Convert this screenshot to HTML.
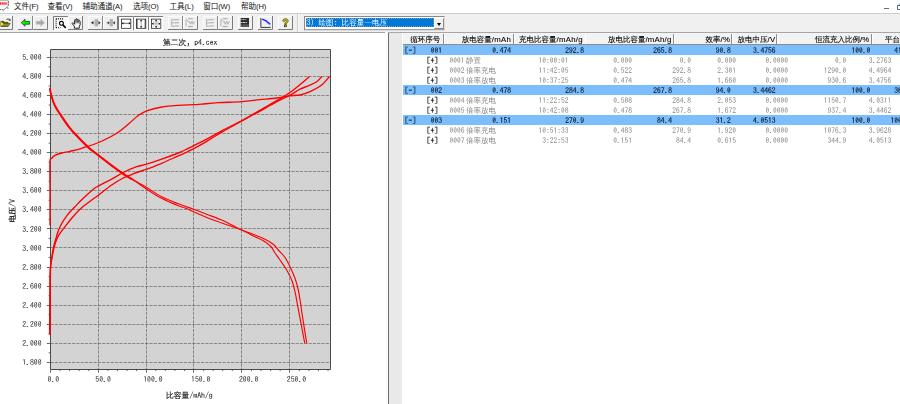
<!DOCTYPE html>
<html lang="zh-CN">
<head>
<meta charset="utf-8">
<title>p4.cex</title>
<style>
html,body{margin:0;padding:0;}
body{width:900px;height:404px;overflow:hidden;background:#fff;position:relative;font-family:"Liberation Sans","Noto Sans CJK SC",sans-serif;-webkit-text-size-adjust:none;}
#menubar{position:absolute;left:0;top:0;width:900px;height:13px;background:#fff;border-bottom:1px solid #cdcdcd;box-sizing:content-box;height:12.6px}
#menubar span{position:absolute;top:1.7px;font-size:7.6px;line-height:10px;color:#111;white-space:nowrap;letter-spacing:-0.1px}
#toolbar{will-change:transform;position:absolute;left:0;top:13.6px;width:900px;height:18px;background:#f0f0f0;border-bottom:1px solid #fff}
#tbsvg{position:absolute;left:0;top:-0.6px}
#combo{position:absolute;left:304.2px;top:2.4px;width:141px;height:14px;box-sizing:border-box;border:1px solid;border-color:#8a8a8a #dcdcdc #a0a0a0 #8a8a8a;box-shadow:0 0.6px 0 #d0d0d0;background:#fff}
#combo .sel{position:absolute;left:0.9px;top:1px;width:127.5px;height:9px;background:#0078d7;outline:1px dotted rgba(255,205,160,0.45);outline-offset:-1px;color:#fff;font-family:"IPAGothic","WenQuanYi Zen Hei","Noto Sans CJK SC",monospace;font-size:7.5px;line-height:9px;white-space:nowrap;overflow:hidden;letter-spacing:0.15px;padding-left:0.6px;box-sizing:border-box}
#combo .btn{position:absolute;right:0.3px;top:0.4px;width:10.4px;height:11.4px;background:#f0f0f0;border:0.7px solid;border-color:#fff #8a8a8a #8a8a8a #fff;box-sizing:border-box}
#combo .btn:after{content:"";position:absolute;left:2.2px;top:3.8px;border:2.4px solid transparent;border-top:3px solid #000;border-bottom:0}
#lefttop{position:absolute;left:0;top:32px;width:385px;height:1.4px;background:#a6a6a6}
#leftpane{position:absolute;left:0;top:33.4px;width:386px;height:371px;background:#fff;overflow:hidden}
.chart{position:absolute;left:0;top:-0.4px;will-change:transform}
.chart text{fill:#222}
.nc{font-family:"Noto Sans CJK SC",sans-serif}
.cj .ax{stroke-width:0.08px}
.ax{font-family:"IPAGothic","Liberation Mono",monospace;font-size:7.75px;letter-spacing:0;fill:#222}
.cj{font-family:"WenQuanYi Zen Hei","Noto Sans CJK SC",sans-serif;font-size:7.8px;fill:#111;stroke:#111;stroke-width:0.15px}
#split0{position:absolute;left:386px;top:32px;width:2px;height:372px;background:#fbfbfb}
#split1{position:absolute;left:387.8px;top:32.4px;width:1.1px;height:372px;background:#6e6e6e}
#split2{position:absolute;left:388.9px;top:33.4px;width:13.5px;height:371px;background:#e9e9e9}
#righttop{position:absolute;left:388px;top:32px;width:512px;height:1.4px;background:#a6a6a6}
#list{will-change:transform;position:absolute;left:403px;top:0;width:497px;height:404px;overflow:hidden;font-family:"IPAGothic","Liberation Mono","WenQuanYi Zen Hei",monospace;font-size:7.5px}
.hdr{position:absolute;left:0;top:33.4px;width:497px;height:10.2px;background:#f3f3f3;border-bottom:1px solid #8c8c8c;color:#000;-webkit-text-stroke:0.1px #000}
.hdr .sep{position:absolute;top:0.4px;width:0.9px;height:9.8px;background:#8c8c8c;border-right:0.8px solid #fff}
.row{position:absolute;left:0;width:497px;height:10px}
.row.m{background:#7cbdfc;color:#06162a;-webkit-text-stroke:0.12px #06162a}
.row.s{color:#858585}
.row.s .k{color:#000;-webkit-text-stroke:0.15px #000}
.row b,.hdr b{position:absolute;top:0;font-weight:normal;line-height:10px;white-space:nowrap}
.hdr b{top:0.4px}
b.r{text-align:right}
.c{font-family:"WenQuanYi Zen Hei","Noto Sans CJK SC",sans-serif;font-size:7.5px}
.n{margin-left:1.6px}
.hl{font-family:"Liberation Sans",sans-serif;font-size:7.8px;letter-spacing:0.25px}
#mdi{position:absolute;left:884px;top:7.6px;width:4.6px;height:1px;background:#5d6f8a}
#mdi2{position:absolute;left:896.8px;top:4.6px;width:5px;height:3.4px;border:0.8px solid #5d6f8a;border-top-width:1.4px;box-shadow:1.4px -1.6px 0 -0.4px #8b99ad}
#appicon{position:absolute;left:0;top:0;width:10px;height:12px}
</style>
</head>
<body>
<div id="menubar">
<svg id="appicon" viewBox="0 0 10 12"><path d="M0 0H8.3V5.6C8.3 7.4 6.2 7 5.4 8.4C4.6 9.8 3.4 10.4 2.4 9.8C1.4 9.2 0.8 9.4 0 9.8Z" fill="#fff"/><path d="M0 0.5H8" stroke="#b9b9b9" stroke-width="1"/><path d="M8.3 0.8V5.6C8.3 7.4 6.2 7 5.4 8.4C4.6 9.8 3.4 10.4 2.4 9.8C1.4 9.2 0.8 9.4 0 9.8" fill="none" stroke="#4a4a4a" stroke-width="0.9" stroke-dasharray="2.2 0.5"/><path d="M0 3.5H7.2" stroke="#ff2a2a" stroke-width="2.6" stroke-dasharray="1.6 0.5"/><path d="M0 6.4H5" stroke="#e4e4e4" stroke-width="0.7"/><rect x="7.2" y="7.7" width="1.3" height="1.1" fill="#22a0a0"/></svg>
<span style="left:14px">文件(F)</span>
<span style="left:47.6px">查看(V)</span>
<span style="left:82.6px">辅助通道(A)</span>
<span style="left:133px">选项(O)</span>
<span style="left:169.6px">工具(L)</span>
<span style="left:203.2px">窗口(W)</span>
<span style="left:241px">帮助(H)</span>
<div id="mdi"></div><div id="mdi2"></div>
</div>
<div id="toolbar">
<svg id="tbsvg" width="302" height="20" viewBox="0 13 302 20">
<path d="M-1.6 29.5V16.4H12.5" fill="none" stroke="#fff" stroke-width="0.9"/>
<path d="M-2.0 29.5H12.5V16.0" fill="none" stroke="#7c7c7c" stroke-width="1"/>
<g transform="translate(0.1 17.8) scale(0.625)"><path d="M1.2 5.6H6L7.2 7.2H12.6V13.6H1.2Z" fill="#5e5e08" stroke="#2a2a00" stroke-width="0.8"/><path d="M1.4 13.6L4.6 8.8H16.4L13 13.6Z" fill="#8e8e1e" stroke="#2a2a00" stroke-width="0.8"/><path d="M1.6 6.6L5.4 9.8L1.6 13Z" fill="#ffff50"/><path d="M10 3.4C11.2 1.2 14.6 1.2 15.6 3.6" fill="none" stroke="#222" stroke-width="1.3"/><path d="M16.6 1.6V4.8H13.4Z" fill="#222"/></g>
<path d="M18.4 29.5V16.4H32.5" fill="none" stroke="#fff" stroke-width="0.9"/>
<path d="M18.0 29.5H32.5V16.0" fill="none" stroke="#7c7c7c" stroke-width="1"/>
<g transform="translate(20.7 17.8) scale(0.625)"><path d="M0.9 7.9L6.9 2.3V5.7H14.2V10.3H6.9V13.5Z" fill="#00f400" stroke="#202020" stroke-width="1.1" stroke-linejoin="round"/></g>
<path d="M33.4 29.5V16.4H47.5" fill="none" stroke="#fff" stroke-width="0.9"/>
<path d="M33.0 29.5H47.5V16.0" fill="none" stroke="#7c7c7c" stroke-width="1"/>
<g transform="translate(35.1 17.8) scale(0.625)"><path d="M15.1 7.9L9.1 2.3V5.7H1.8V10.3H9.1V13.5Z" fill="#a6a6a6" stroke="#bdbdbd" stroke-width="0.9" stroke-linejoin="round"/></g>
<rect x="53.0" y="16.0" width="15.0" height="14.0" fill="#fbfbfb"/>
<path d="M53.5 30.0V16.5H68.0" fill="none" stroke="#7c7c7c" stroke-width="1"/>
<path d="M54.0 29.8H67.8V17.0" fill="none" stroke="#fff" stroke-width="0.9"/>
<g transform="translate(55.6 18.3) scale(0.625)"><path d="M0.8 0.9H13.6M0.8 0.9V15.2M0.8 15.2H8" fill="none" stroke="#000" stroke-width="1.7" stroke-dasharray="1.6 1.6"/><circle cx="9.3" cy="8.1" r="3.1" fill="#fff" stroke="#000" stroke-width="1.8"/><path d="M11.6 10.6L16.2 15.4" stroke="#000" stroke-width="2.6"/></g>
<path d="M68.4 29.5V16.4H82.5" fill="none" stroke="#fff" stroke-width="0.9"/>
<path d="M68.0 29.5H82.5V16.0" fill="none" stroke="#7c7c7c" stroke-width="1"/>
<g transform="translate(69.9 17.8) scale(0.625)"><g transform="translate(1.9 0.2) scale(1.06)"><path d="M5 15.5V12.5L1.8 8.8C1.2 7.6 2.8 6.8 3.7 7.8L5.4 9.6V3.4C5.4 2 7.3 2 7.4 3.4V2.2C7.5 0.8 9.4 0.8 9.5 2.2V3.2C9.7 1.9 11.5 2 11.6 3.4V4.8C11.9 3.7 13.6 3.9 13.6 5.4V10.5L12.4 12.7V15.5Z" fill="#fff" stroke="#111" stroke-width="1.4"/><path d="M6 2.4H12.6L13 6.4H6Z" fill="#777" opacity="0.75"/><path d="M7.4 3.5V8.4M9.5 3.5V8.4M11.6 4.5V8.4" stroke="#333" stroke-width="0.9"/></g></g>
<path d="M88.4 29.5V16.4H102.5" fill="none" stroke="#fff" stroke-width="0.9"/>
<path d="M88.0 29.5H102.5V16.0" fill="none" stroke="#7c7c7c" stroke-width="1"/>
<g transform="translate(90.7 17.8) scale(0.625)"><rect x="6.4" y="2.2" width="5.3" height="11.4" fill="#a4a4a4"/><path d="M7.6 2.2V13.6M9.1 2.2V13.6M10.6 2.2V13.6" stroke="#c6c6c6" stroke-width="0.6"/><path d="M0.3 8L4.4 5.2V10.8Z M15.8 8L12.4 5.2V10.8Z" fill="#2a2a2a"/><path d="M4.4 8H6.4M11.7 8H12.6" stroke="#777" stroke-width="1"/></g>
<path d="M103.4 29.5V16.4H117.5" fill="none" stroke="#fff" stroke-width="0.9"/>
<path d="M103.0 29.5H117.5V16.0" fill="none" stroke="#7c7c7c" stroke-width="1"/>
<g transform="translate(105.3 17.8) scale(0.625)"><rect x="7" y="2.2" width="5" height="11.4" fill="#a4a4a4"/><path d="M8.2 2.2V13.6M9.6 2.2V13.6M11 2.2V13.6" stroke="#c6c6c6" stroke-width="0.6"/><path d="M7 8L3.8 5.4V10.6Z M12 8L15.2 5.4V10.6Z" fill="#2a2a2a"/><path d="M1.6 8H3.8M15.2 8H16.6" stroke="#888" stroke-width="1"/></g>
<rect x="118.0" y="16.0" width="15.0" height="14.0" fill="#fbfbfb"/>
<path d="M118.5 30.0V16.5H133.0" fill="none" stroke="#7c7c7c" stroke-width="1"/>
<path d="M119.0 29.8H132.8V17.0" fill="none" stroke="#fff" stroke-width="0.9"/>
<g transform="translate(120.5 18.3) scale(0.625)"><rect x="1.5" y="1.3" width="15" height="14.7" fill="#fff" stroke="#111" stroke-width="1.15"/><path d="M2 8H16" stroke="#111" stroke-width="1"/><path d="M2 8L4.6 6.2V9.8Z M16 8L13.4 6.2V9.8Z" fill="#000"/></g>
<rect x="133.0" y="16.0" width="15.0" height="14.0" fill="#fbfbfb"/>
<path d="M133.5 30.0V16.5H148.0" fill="none" stroke="#7c7c7c" stroke-width="1"/>
<path d="M134.0 29.8H147.8V17.0" fill="none" stroke="#fff" stroke-width="0.9"/>
<g transform="translate(135.5 18.3) scale(0.625)"><rect x="1.5" y="1.3" width="15" height="14.7" fill="#fff" stroke="#111" stroke-width="1.15"/><path d="M2.6 1.3V16M15.4 1.3V16" stroke="#000" stroke-width="1"/><path d="M9 3V14.4" stroke="#8a8a8a" stroke-width="1.1"/><path d="M9 2L7.2 4.8H10.8Z M9 15.4L7.2 12.6H10.8Z" fill="#111"/></g>
<rect x="148.0" y="16.0" width="15.0" height="14.0" fill="#fbfbfb"/>
<path d="M148.5 30.0V16.5H163.0" fill="none" stroke="#7c7c7c" stroke-width="1"/>
<path d="M149.0 29.8H162.8V17.0" fill="none" stroke="#fff" stroke-width="0.9"/>
<g transform="translate(150.5 18.3) scale(0.625)"><rect x="1.5" y="1.3" width="15" height="14.7" fill="#fff" stroke="#111" stroke-width="1.15"/><path d="M2 8.6H16M9 2V15.4" stroke="#9a9a9a" stroke-width="1"/><path d="M3.4 3.2L14.6 14M14.6 3.2L3.4 14" stroke="#b4b4b4" stroke-width="0.9"/><path d="M2 8.6L4.8 6.6V10.6Z M16 8.6L13.2 6.6V10.6Z M9 2L7 4.6H11Z M9 15.4L7 12.8H11Z" fill="#111"/></g>
<path d="M168.4 29.5V16.4H182.5" fill="none" stroke="#fff" stroke-width="0.9"/>
<path d="M168.0 29.5H182.5V16.0" fill="none" stroke="#7c7c7c" stroke-width="1"/>
<g transform="translate(170.4 17.8) scale(0.625)"><path d="M2.1 2.6V13.6M2.1 3.2H6.6M2.1 8.3H6.6M2.1 13.6H6.6" fill="none" stroke="#a2a2a2" stroke-width="1.2"/><path d="M6.6 3.2H13.6M6.6 8.3H13.6M6.6 13.4H13.6" stroke="#a8a8a8" stroke-width="2"/><path d="M6.6 4.6H13.8M6.6 9.7H13.8M6.6 14.8H13.8" stroke="#fff" stroke-width="0.8"/></g>
<path d="M183.4 29.5V16.4H197.5" fill="none" stroke="#fff" stroke-width="0.9"/>
<path d="M183.0 29.5H197.5V16.0" fill="none" stroke="#7c7c7c" stroke-width="1"/>
<g transform="translate(185.1 17.8) scale(0.625)"><path d="M1.6 13.6V2.6L9.4 9.9" fill="none" stroke="#a2a2a2" stroke-width="1.2"/><path d="M4.3 1.8H12.3M4.6 14.2H12.3" stroke="#a8a8a8" stroke-width="1.8"/><path d="M7 5.4L9 10.4L11 5.4L13 10.4L15 5.4" fill="none" stroke="#a8a8a8" stroke-width="1.3"/><path d="M4.3 3.1H12.3M4.6 15.5H12.3" stroke="#fff" stroke-width="0.7"/></g>
<path d="M203.4 29.5V16.4H217.5" fill="none" stroke="#fff" stroke-width="0.9"/>
<path d="M203.0 29.5H217.5V16.0" fill="none" stroke="#7c7c7c" stroke-width="1"/>
<g transform="translate(205.3 17.8) scale(0.625)"><path d="M2.1 2.6V13.6M2.1 3.2H6.6M2.1 8.3H6.6M2.1 13.6H6.6" fill="none" stroke="#a2a2a2" stroke-width="1.2"/><path d="M6.6 3.2H13.6M6.6 8.3H13.6M6.6 13.4H13.6" stroke="#a8a8a8" stroke-width="2"/><path d="M6.6 4.6H13.8M6.6 9.7H13.8M6.6 14.8H13.8" stroke="#fff" stroke-width="0.8"/></g>
<path d="M218.4 29.5V16.4H232.5" fill="none" stroke="#fff" stroke-width="0.9"/>
<path d="M218.0 29.5H232.5V16.0" fill="none" stroke="#7c7c7c" stroke-width="1"/>
<g transform="translate(219.9 17.8) scale(0.625)"><path d="M1.6 13.6V2.6L9.4 9.9" fill="none" stroke="#a2a2a2" stroke-width="1.2"/><path d="M4.3 1.8H12.3M4.6 14.2H12.3" stroke="#a8a8a8" stroke-width="1.8"/><path d="M7 5.4L9 10.4L11 5.4L13 10.4L15 5.4" fill="none" stroke="#a8a8a8" stroke-width="1.3"/><path d="M4.3 3.1H12.3M4.6 15.5H12.3" stroke="#fff" stroke-width="0.7"/></g>
<path d="M238.4 29.5V16.4H252.5" fill="none" stroke="#fff" stroke-width="0.9"/>
<path d="M238.0 29.5H252.5V16.0" fill="none" stroke="#7c7c7c" stroke-width="1"/>
<g transform="translate(240.5 17.8) scale(0.625)"><rect x="0.3" y="0.3" width="13.3" height="14.3" fill="#2c2c2c"/><path d="M0.3 2.9H13.6" stroke="#e8e8e8" stroke-width="1.3" stroke-dasharray="1.4 1.2 3.6 1.2 1.4 4.5"/><path d="M0.3 7.6H13.6" stroke="#f4f4f4" stroke-width="1.5" stroke-dasharray="2 1 4 1 2 3.3"/><path d="M0.3 11.4H13.6" stroke="#9a9a9a" stroke-width="0.9"/><path d="M1 13.4H13.6" stroke="#cfcfcf" stroke-width="1" stroke-dasharray="1.3 1.1"/></g>
<path d="M258.4 29.5V16.4H272.5" fill="none" stroke="#fff" stroke-width="0.9"/>
<path d="M258.0 29.5H272.5V16.0" fill="none" stroke="#7c7c7c" stroke-width="1"/>
<g transform="translate(260.5 17.8) scale(0.625)"><path d="M0.6 0.3V15.4H16.3" fill="none" stroke="#222" stroke-width="1.4"/><path d="M2.6 2.2L9 4.8L15.4 10.4" fill="none" stroke="#1818ff" stroke-width="2"/><path d="M7 5.6L15.6 11.6M10 6L15.8 8.8" stroke="#4c4cff" stroke-width="1.2" stroke-dasharray="1.3 1"/></g>
<path d="M278.4 29.5V16.4H292.5" fill="none" stroke="#fff" stroke-width="0.9"/>
<path d="M278.0 29.5H292.5V16.0" fill="none" stroke="#7c7c7c" stroke-width="1"/>
<g transform="translate(280.4 17.8) scale(0.625)"><path d="M3.9 5.4C3.6 0.4 12.6 0.2 12.4 5C12.3 7.6 9.6 7.8 9.6 10.4H6.9C6.8 7 9.6 6.8 9.6 4.9C9.6 3.5 6.9 3.5 6.8 5.4Z" fill="#e6e000" stroke="#2e2a00" stroke-width="1.1"/><rect x="6.8" y="11.6" width="2.9" height="2.7" fill="#e6e000" stroke="#2e2a00" stroke-width="1.1"/></g>
<path d="M297.5 14.2V31.5" stroke="#c4c4c4" stroke-width="0.9"/><path d="M298.4 14.2V31.5" stroke="#fff" stroke-width="0.9"/>
</svg>
<div id="combo"><div class="sel">3) <span class="c">绘图</span>: <span class="c">比容量—电压</span></div><div class="btn"></div></div>
</div>
<div id="lefttop"></div>
<div id="leftpane">
<svg class="chart" width="386" height="371" viewBox="0 33 386 371">
<rect x="50.5" y="49.5" width="280.0" height="320.0" fill="#d3d3d3"/>
<path d="M50.5 57.50H330.5M50.5 76.50H330.5M50.5 95.50H330.5M50.5 114.50H330.5M50.5 133.50H330.5M50.5 152.50H330.5M50.5 171.50H330.5M50.5 190.50H330.5M50.5 209.50H330.5M50.5 228.50H330.5M50.5 247.50H330.5M50.5 267.50H330.5M50.5 286.50H330.5M50.5 305.50H330.5M50.5 324.50H330.5M50.5 343.50H330.5M50.5 362.50H330.5M98.50 49.5V369.5M146.50 49.5V369.5M193.50 49.5V369.5M241.50 49.5V369.5M289.50 49.5V369.5" stroke="#5a5a5a" stroke-width="0.62" stroke-dasharray="3.2 1.1" fill="none"/>
<path d="M50.5 49.5H330.5V369.5H50.5Z" stroke="#4a4a4a" stroke-width="1" fill="none"/>
<path d="M46.8 57.50H50.5M48.6 66.93H50.5M46.8 76.50H50.5M48.6 85.98H50.5M46.8 95.50H50.5M48.6 105.04H50.5M46.8 114.50H50.5M48.6 124.10H50.5M46.8 133.50H50.5M48.6 143.15H50.5M46.8 152.50H50.5M48.6 162.21H50.5M46.8 171.50H50.5M48.6 181.26H50.5M46.8 190.50H50.5M48.6 200.32H50.5M46.8 209.50H50.5M48.6 219.38H50.5M46.8 228.50H50.5M48.6 238.43H50.5M46.8 247.50H50.5M48.6 257.49H50.5M46.8 267.50H50.5M48.6 276.54H50.5M46.8 286.50H50.5M48.6 295.60H50.5M46.8 305.50H50.5M48.6 314.66H50.5M46.8 324.50H50.5M48.6 333.71H50.5M46.8 343.50H50.5M48.6 352.77H50.5M46.8 362.50H50.5M50.50 369.5V372.7M60.02 369.5V371.1M69.59 369.5V371.1M79.17 369.5V371.1M88.74 369.5V371.1M98.50 369.5V372.7M107.88 369.5V371.1M117.45 369.5V371.1M127.03 369.5V371.1M136.60 369.5V371.1M146.50 369.5V372.7M155.74 369.5V371.1M165.31 369.5V371.1M174.89 369.5V371.1M184.46 369.5V371.1M193.50 369.5V372.7M203.60 369.5V371.1M213.17 369.5V371.1M222.75 369.5V371.1M232.32 369.5V371.1M241.50 369.5V372.7M251.46 369.5V371.1M261.03 369.5V371.1M270.61 369.5V371.1M280.18 369.5V371.1M289.50 369.5V372.7M299.32 369.5V371.1M308.89 369.5V371.1M318.47 369.5V371.1M328.04 369.5V371.1" stroke="#444" stroke-width="0.8" fill="none"/>
<path d="M50.0 88.3 C50.3 89.5 50.9 92.5 51.7 95.3 C52.5 98.1 53.3 101.6 55.0 105.0 C56.7 108.4 59.2 112.0 61.7 115.8 C64.2 119.5 67.2 124.0 70.0 127.5 C72.8 131.0 75.2 133.5 78.3 136.7 C81.3 139.9 84.9 143.6 88.3 146.7 C91.7 149.8 94.8 151.9 98.7 155.0 C102.6 158.1 107.6 161.9 111.7 165.0 C115.8 168.1 119.1 170.5 123.3 173.3 C127.5 176.1 132.8 179.3 136.7 181.7 C140.6 184.1 142.5 185.0 146.7 187.5 C150.9 190.0 156.4 194.0 161.7 196.7 C167.0 199.4 173.0 201.7 178.3 203.8 C183.6 205.9 188.8 207.5 193.5 209.2 C198.2 210.9 202.0 212.4 206.7 214.2 C211.4 216.0 217.3 218.1 221.7 220.0 C226.1 221.9 230.0 224.1 233.3 225.8 C236.6 227.5 238.1 228.5 241.7 230.0 C245.3 231.5 251.1 233.5 255.0 235.0 C258.9 236.5 261.9 237.7 265.0 239.2 C268.1 240.7 271.1 242.4 273.3 244.2 C275.5 246.0 276.4 247.8 278.3 250.0 C280.2 252.2 283.1 254.7 285.0 257.5 C286.9 260.3 288.3 263.2 290.0 266.7 C291.7 270.2 293.6 274.4 295.0 278.3 C296.4 282.2 297.3 285.6 298.3 290.0 C299.3 294.4 300.1 300.6 300.8 305.0 C301.5 309.4 301.5 310.4 302.5 316.7 C303.5 323.0 306.0 338.6 306.7 343.0" stroke="#ff0000" stroke-width="1.15" fill="none" stroke-linejoin="round" stroke-linecap="round"/>
<path d="M49.8 88.8 C50.0 89.9 50.6 93.0 51.5 95.8 C52.3 98.5 53.1 102.0 54.8 105.5 C56.4 108.9 59.0 112.5 61.5 116.2 C64.0 120.0 67.0 124.5 69.8 128.0 C72.5 131.4 75.0 133.9 78.0 137.1 C81.1 140.3 84.6 144.1 88.0 147.1 C91.5 150.2 94.5 152.4 98.5 155.4 C102.4 158.5 107.4 162.4 111.5 165.4 C115.5 168.5 118.9 171.0 123.0 173.8 C127.2 176.5 132.5 179.6 136.4 182.1 C140.4 184.7 142.5 186.5 146.7 189.2 C150.9 191.9 156.4 195.5 161.7 198.3 C167.0 201.1 174.4 204.2 178.3 205.8 C182.2 207.4 182.5 207.0 185.0 208.0 C187.5 209.0 189.7 210.1 193.3 211.7 C196.9 213.3 202.0 215.6 206.7 217.5 C211.4 219.4 217.3 221.4 221.7 223.0 C226.1 224.6 230.0 225.8 233.3 227.0 C236.6 228.2 238.1 228.4 241.7 230.0 C245.3 231.6 251.1 234.8 255.0 236.7 C258.9 238.6 262.2 239.9 265.0 241.7 C267.8 243.5 270.0 245.6 271.7 247.5 C273.4 249.4 273.6 250.9 275.0 253.0 C276.4 255.1 278.1 257.2 280.0 260.0 C281.9 262.8 284.8 266.7 286.7 270.0 C288.6 273.3 290.3 276.4 291.7 280.0 C293.1 283.6 294.0 287.5 295.0 291.7 C296.0 295.9 296.7 300.8 297.5 305.0 C298.3 309.2 298.5 310.4 299.7 316.7 C300.9 323.0 303.9 338.6 304.7 343.0" stroke="#ff0000" stroke-width="1.15" fill="none" stroke-linejoin="round" stroke-linecap="round"/>
<path d="M49.5 89.1 C49.8 90.3 50.4 93.4 51.2 96.1 C52.1 98.9 52.9 102.4 54.5 105.8 C56.2 109.3 58.8 112.9 61.2 116.6 C63.8 120.4 66.8 124.9 69.5 128.3 C72.3 131.8 74.8 134.3 77.8 137.5 C80.9 140.7 84.4 144.5 87.8 147.5 C91.2 150.6 94.3 152.8 98.2 155.8 C102.2 158.9 107.2 162.8 111.2 165.8 C115.3 168.9 119.5 171.9 122.8 174.2 C126.2 176.4 129.8 178.4 131.2 179.3" stroke="#ff0000" stroke-width="1.15" fill="none" stroke-linejoin="round" stroke-linecap="round"/>
<path d="M50.0 225.0 C50.0 219.2 50.0 200.6 50.0 190.0 C50.0 179.4 49.7 167.0 50.0 161.7 C50.3 156.4 50.9 159.4 51.7 158.3 C52.5 157.2 53.3 156.2 55.0 155.3 C56.7 154.4 59.2 153.7 61.7 153.0 C64.2 152.3 66.7 152.1 70.0 151.3 C73.3 150.5 76.9 149.8 81.7 148.3 C86.5 146.8 92.9 145.0 98.7 142.5 C104.5 140.0 111.8 136.4 116.7 133.3 C121.6 130.2 124.7 127.2 128.3 124.2 C131.9 121.2 135.2 117.7 138.3 115.5 C141.4 113.3 142.8 112.2 146.7 110.8 C150.6 109.4 156.4 107.9 161.7 107.0 C167.0 106.1 173.0 105.7 178.3 105.3 C183.7 104.9 189.9 104.9 193.8 104.7 C197.7 104.5 197.6 104.6 201.7 104.2 C205.8 103.8 211.6 103.0 218.3 102.6 C225.0 102.2 234.8 102.2 241.7 101.7 C248.6 101.2 254.2 100.3 260.0 99.7 C265.8 99.1 271.8 98.7 276.7 98.0 C281.6 97.3 285.8 96.3 289.7 95.8 C293.6 95.3 296.3 95.8 300.0 95.0 C303.7 94.2 308.1 92.5 311.7 90.8 C315.3 89.1 318.8 87.3 321.7 85.0 C324.6 82.7 327.9 78.1 329.2 76.7" stroke="#ff0000" stroke-width="1.35" fill="none" stroke-linejoin="round" stroke-linecap="round"/>
<path d="M50.0 334.0 C50.0 328.3 50.1 310.7 50.2 300.0 C50.3 289.3 50.3 276.3 50.5 270.0 C50.7 263.7 50.7 265.6 51.2 262.0 C51.7 258.4 52.4 252.7 53.3 248.3 C54.2 243.9 55.6 239.4 56.7 235.8 C57.8 232.2 58.3 230.0 60.0 226.7 C61.7 223.4 64.2 219.1 66.7 215.8 C69.2 212.5 72.2 209.6 75.0 206.7 C77.8 203.8 80.2 201.2 83.3 198.3 C86.3 195.4 90.7 191.3 93.3 189.2 C95.9 187.1 95.6 187.5 98.7 185.8 C101.8 184.1 107.6 181.4 111.7 179.2 C115.8 177.0 119.1 174.6 123.3 172.5 C127.5 170.4 132.8 168.1 136.7 166.7 C140.6 165.3 142.5 165.4 146.7 164.2 C150.9 162.9 156.4 161.1 161.7 159.2 C167.0 157.3 174.4 154.5 178.3 153.0 C182.2 151.5 182.5 151.2 185.0 150.0 C187.5 148.8 189.7 147.6 193.3 145.8 C196.9 144.0 202.0 141.7 206.7 139.2 C211.4 136.7 215.9 133.9 221.7 130.8 C227.5 127.7 236.7 123.3 241.7 120.8 C246.7 118.2 247.8 117.6 251.7 115.5 C255.6 113.4 260.6 110.8 265.0 108.3 C269.4 105.8 274.2 103.0 278.3 100.8 C282.4 98.6 286.1 97.2 289.7 95.3 C293.3 93.4 296.9 90.8 300.0 89.2 C303.1 87.6 305.5 87.0 308.3 85.8 C311.1 84.5 314.5 83.2 316.7 81.7 C318.9 80.2 320.9 77.5 321.7 76.7" stroke="#ff0000" stroke-width="1.35" fill="none" stroke-linejoin="round" stroke-linecap="round"/>
<path d="M49.6 334.0 C49.6 328.3 49.7 310.7 49.8 300.0 C49.9 289.3 49.8 277.5 50.2 270.0 C50.7 262.5 51.7 259.3 52.5 255.0 C53.3 250.7 54.0 247.4 55.0 244.2 C56.0 241.0 56.6 238.7 58.3 235.8 C60.0 232.9 62.8 229.6 65.0 226.7 C67.2 223.8 69.2 221.2 71.7 218.3 C74.2 215.4 76.7 212.2 80.0 209.2 C83.3 206.1 88.6 202.4 91.7 200.0 C94.8 197.6 95.4 197.5 98.7 195.0 C102.0 192.5 107.6 187.8 111.7 185.0 C115.8 182.2 119.1 180.1 123.3 178.0 C127.5 175.9 132.8 174.0 136.7 172.5 C140.6 171.0 142.5 170.7 146.7 169.2 C150.9 167.7 156.4 165.5 161.7 163.3 C167.0 161.1 174.4 157.5 178.3 155.8 C182.2 154.1 182.5 154.2 185.0 153.0 C187.5 151.8 189.7 150.8 193.3 148.9 C196.9 147.0 202.0 144.1 206.7 141.3 C211.4 138.5 217.0 135.0 221.7 132.2 C226.4 129.4 231.7 126.6 235.0 124.7 C238.3 122.8 238.9 122.6 241.7 121.0 C244.5 119.4 248.1 117.1 251.7 115.0 C255.3 112.9 259.4 110.5 263.3 108.3 C267.2 106.1 271.4 103.8 275.0 101.7 C278.6 99.6 281.9 97.8 285.0 95.8 C288.1 93.8 290.5 92.1 293.3 90.0 C296.1 87.9 299.1 85.5 301.7 83.3 C304.3 81.1 307.9 77.8 309.2 76.7" stroke="#ff0000" stroke-width="1.35" fill="none" stroke-linejoin="round" stroke-linecap="round"/>
<text class="ax" x="41.6" y="60.0" text-anchor="end">5.000</text>
<text class="ax" x="41.6" y="79.1" text-anchor="end">4.800</text>
<text class="ax" x="41.6" y="98.1" text-anchor="end">4.600</text>
<text class="ax" x="41.6" y="117.2" text-anchor="end">4.400</text>
<text class="ax" x="41.6" y="136.2" text-anchor="end">4.200</text>
<text class="ax" x="41.6" y="155.3" text-anchor="end">4.000</text>
<text class="ax" x="41.6" y="174.3" text-anchor="end">3.800</text>
<text class="ax" x="41.6" y="193.4" text-anchor="end">3.600</text>
<text class="ax" x="41.6" y="212.4" text-anchor="end">3.400</text>
<text class="ax" x="41.6" y="231.5" text-anchor="end">3.200</text>
<text class="ax" x="41.6" y="250.6" text-anchor="end">3.000</text>
<text class="ax" x="41.6" y="269.6" text-anchor="end">2.800</text>
<text class="ax" x="41.6" y="288.7" text-anchor="end">2.600</text>
<text class="ax" x="41.6" y="307.7" text-anchor="end">2.400</text>
<text class="ax" x="41.6" y="326.8" text-anchor="end">2.200</text>
<text class="ax" x="41.6" y="345.8" text-anchor="end">2.000</text>
<text class="ax" x="41.6" y="364.9" text-anchor="end">1.800</text>
<text class="ax" x="47.5" y="382.3">0.0</text>
<text class="ax" x="95.3" y="382.3">50.0</text>
<text class="ax" x="143.2" y="382.3">100.0</text>
<text class="ax" x="191.0" y="382.3">150.0</text>
<text class="ax" x="238.9" y="382.3">200.0</text>
<text class="ax" x="286.8" y="382.3">250.0</text>
<text class="cj" x="163" y="44.7">第二次<tspan class="nc">，</tspan><tspan class="ax">p4.cex</tspan></text>
<text class="cj" x="166" y="397.8">比容量<tspan class="ax">/mAh/g</tspan></text>
<text class="cj" transform="translate(14.6 222.5) rotate(-90)">电压<tspan class="ax">/V</tspan></text>
</svg>
</div>
<div id="split0"></div><div id="split1"></div><div id="split2"></div>
<div id="righttop"></div>
<div id="list">
<div class="hdr">
<i class="sep" style="left:40.4px"></i>
<i class="sep" style="left:110.0px"></i>
<i class="sep" style="left:181.5px"></i>
<i class="sep" style="left:269.9px"></i>
<i class="sep" style="left:328.4px"></i>
<i class="sep" style="left:373.2px"></i>
<i class="sep" style="left:467.9px"></i>
<b class="r" style="right:459.7px"><span class="c">循环序号</span></b>
<b class="r" style="right:389.0px"><span class="c">放电容量</span><span class="hl">/mAh</span></b>
<b class="r" style="right:317.2px"><span class="c">充电比容量</span><span class="hl">/mAh/g</span></b>
<b class="r" style="right:228.4px"><span class="c">放电比容量</span><span class="hl">/mAh/g</span></b>
<b class="r" style="right:169.8px"><span class="c">效率</span><span class="hl">/%</span></b>
<b class="r" style="right:124.6px"><span class="c">放电中压</span><span class="hl">/V</span></b>
<b class="r" style="right:30.5px"><span class="c">恒流充入比例</span><span class="hl">/%</span></b>
<b class="l" style="left:482.0px"><span class="c">平台</span></b>
</div>
<div class="row m" style="top:45px">
<b class="l" style="left:1.7px">[-]</b>
<b class="r" style="right:458.0px">001</b>
<b class="r" style="right:389.0px">0.474</b>
<b class="r" style="right:316.0px">292.8</b>
<b class="r" style="right:228.0px">265.8</b>
<b class="r" style="right:169.2px">90.8</b>
<b class="r" style="right:124.5px">3.4756</b>
<b class="r" style="right:29.8px">100.0</b>
<b class="l" style="left:491.3px">41</b>
</div>
<div class="row s" style="top:55px">
<b class="l k" style="left:23.7px">[+]</b>
<b class="l" style="left:46.5px">0001<span class="c n">静置</span></b>
<b class="r" style="right:331.5px">10:00:01</b>
<b class="r" style="right:268.0px">0.000</b>
<b class="r" style="right:209.0px">0.0</b>
<b class="r" style="right:164.1px">0.000</b>
<b class="r" style="right:112.0px">0.0000</b>
<b class="r" style="right:53.8px">0.0</b>
<b class="r" style="right:8.8px">3.2763</b>
</div>
<div class="row s" style="top:65px">
<b class="l k" style="left:23.7px">[+]</b>
<b class="l" style="left:46.5px">0002<span class="c n">倍率充电</span></b>
<b class="r" style="right:331.5px">11:42:05</b>
<b class="r" style="right:268.0px">0.522</b>
<b class="r" style="right:209.0px">292.8</b>
<b class="r" style="right:164.1px">2.301</b>
<b class="r" style="right:112.0px">0.0000</b>
<b class="r" style="right:53.8px">1290.0</b>
<b class="r" style="right:8.8px">4.4964</b>
</div>
<div class="row s" style="top:75px">
<b class="l k" style="left:23.7px">[+]</b>
<b class="l" style="left:46.5px">0003<span class="c n">倍率放电</span></b>
<b class="r" style="right:331.5px">10:37:25</b>
<b class="r" style="right:268.0px">0.474</b>
<b class="r" style="right:209.0px">265.8</b>
<b class="r" style="right:164.1px">1.660</b>
<b class="r" style="right:112.0px">0.0000</b>
<b class="r" style="right:53.8px">930.6</b>
<b class="r" style="right:8.8px">3.4756</b>
</div>
<div class="row m" style="top:85px">
<b class="l" style="left:1.7px">[-]</b>
<b class="r" style="right:458.0px">002</b>
<b class="r" style="right:389.0px">0.478</b>
<b class="r" style="right:316.0px">284.8</b>
<b class="r" style="right:228.0px">267.8</b>
<b class="r" style="right:169.2px">94.0</b>
<b class="r" style="right:124.5px">3.4462</b>
<b class="r" style="right:29.8px">100.0</b>
<b class="l" style="left:491.3px">36</b>
</div>
<div class="row s" style="top:95px">
<b class="l k" style="left:23.7px">[+]</b>
<b class="l" style="left:46.5px">0004<span class="c n">倍率充电</span></b>
<b class="r" style="right:331.5px">11:22:52</b>
<b class="r" style="right:268.0px">0.508</b>
<b class="r" style="right:209.0px">284.8</b>
<b class="r" style="right:164.1px">2.053</b>
<b class="r" style="right:112.0px">0.0000</b>
<b class="r" style="right:53.8px">1150.7</b>
<b class="r" style="right:8.8px">4.0311</b>
</div>
<div class="row s" style="top:105px">
<b class="l k" style="left:23.7px">[+]</b>
<b class="l" style="left:46.5px">0005<span class="c n">倍率放电</span></b>
<b class="r" style="right:331.5px">10:42:08</b>
<b class="r" style="right:268.0px">0.478</b>
<b class="r" style="right:209.0px">267.8</b>
<b class="r" style="right:164.1px">1.672</b>
<b class="r" style="right:112.0px">0.0000</b>
<b class="r" style="right:53.8px">937.4</b>
<b class="r" style="right:8.8px">3.4462</b>
</div>
<div class="row m" style="top:115px">
<b class="l" style="left:1.7px">[-]</b>
<b class="r" style="right:458.0px">003</b>
<b class="r" style="right:389.0px">0.151</b>
<b class="r" style="right:316.0px">270.9</b>
<b class="r" style="right:228.0px">84.4</b>
<b class="r" style="right:169.2px">31.2</b>
<b class="r" style="right:124.5px">4.0513</b>
<b class="r" style="right:29.8px">100.0</b>
<b class="l" style="left:487.5px">100</b>
</div>
<div class="row s" style="top:125px">
<b class="l k" style="left:23.7px">[+]</b>
<b class="l" style="left:46.5px">0006<span class="c n">倍率充电</span></b>
<b class="r" style="right:331.5px">10:51:33</b>
<b class="r" style="right:268.0px">0.483</b>
<b class="r" style="right:209.0px">270.9</b>
<b class="r" style="right:164.1px">1.920</b>
<b class="r" style="right:112.0px">0.0000</b>
<b class="r" style="right:53.8px">1076.3</b>
<b class="r" style="right:8.8px">3.9628</b>
</div>
<div class="row s" style="top:135px">
<b class="l k" style="left:23.7px">[+]</b>
<b class="l" style="left:46.5px">0007<span class="c n">倍率放电</span></b>
<b class="r" style="right:331.5px">3:22:53</b>
<b class="r" style="right:268.0px">0.151</b>
<b class="r" style="right:209.0px">84.4</b>
<b class="r" style="right:164.1px">0.615</b>
<b class="r" style="right:112.0px">0.0000</b>
<b class="r" style="right:53.8px">344.9</b>
<b class="r" style="right:8.8px">4.0513</b>
</div>
</div>
</body>
</html>
